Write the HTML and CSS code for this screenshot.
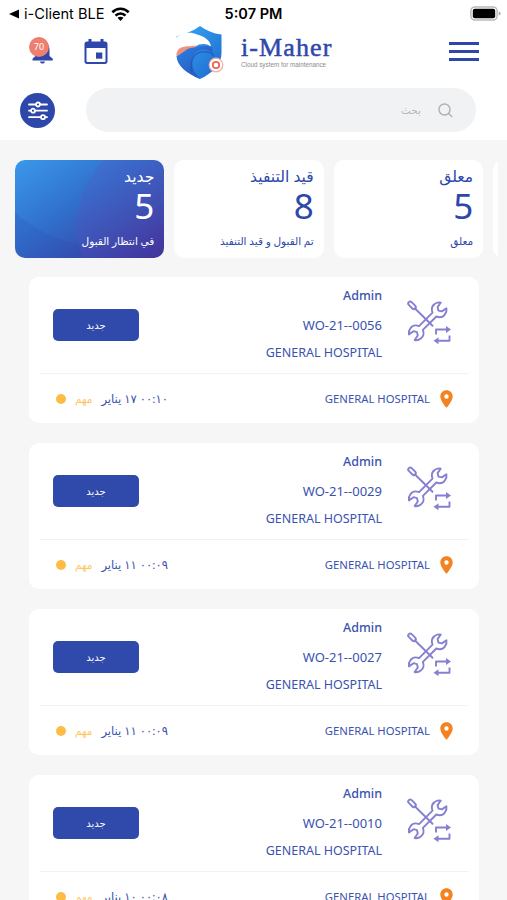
FILE: index.html
```html
<!DOCTYPE html>
<html lang="ar">
  <head>
    <meta charset="UTF-8" />
    <meta name="viewport" content="width=device-width, initial-scale=1.0" />
    <title>i-Maher</title>
    <link rel="stylesheet" href="styles.css" />
  </head>
  <body>
    <svg class="sprite" width="0" height="0">
      <symbol id="tools" viewBox="0 0 46 48">
        <g fill="none" stroke="#8580d0" stroke-width="1.900" stroke-linejoin="round" stroke-linecap="round">
          <path transform="translate(22.700 23.300) rotate(-45)" d="M-9.500-2.700H9.500C11-6 14-7.800 17-7.300c2 .2 4.200 1.400 5.500 3.300L17-3l-1.800 3L17 3l5.500 1c-1.300 1.900-3.500 3.100-5.500 3.300-3 .5-6-1.300-7.500-4.600H-9.500C-11 6-14 7.800-17 7.300c-2-.2-4.200-1.400-5.500-3.300L-17 3l1.800-3L-17-3l-5.500-1c1.300-1.900 3.500-3.100 5.500-3.300 3-.5 6 1.300 7.500 4.600z" />
          <path d="m10 10.500 17.500 17.300" />
          <rect transform="translate(7 7.300) rotate(45)" x="-4.500" y="-2" width="9" height="4" rx="2" />
          <path stroke-linecap="butt" d="M31 36.500v-5h11M44.500 37.500v5.300H31" />
        </g>
        <path d="m41 28 5 3.500-5 3.500zM33.500 39.300 28.500 42.800l5 3.500z" fill="#8580d0" />
      </symbol>
      <symbol id="pin" viewBox="0 0 13 18">
        <path fill="#f58220" fill-rule="evenodd" d="M6.500.3C3 .3.300 3 .300 6.500c0 4.600 6.200 11.300 6.200 11.300s6.200-6.700 6.200-11.300C12.700 3 10 .3 6.500.3zm0 8.400a2.200 2.200 0 1 1 0-4.400 2.200 2.200 0 0 1 0 4.400z" />
      </symbol>
    </svg>

    <header class="header">
      <div class="status">
        <span class="back">
          <svg width="11" height="10" viewBox="0 0 11 10"><path d="M0 5 10 .5v9z" /></svg>
          <span class="app">i-Client BLE</span>
          <svg width="19" height="14" viewBox="0 0 19 14">
            <g fill="none" stroke="#000" stroke-width="2.600">
              <path d="M1.300 5.200c4.700-4.600 11.700-4.600 16.400 0M4.500 8.600c2.900-2.900 7.100-2.900 10 0" />
            </g>
            <path d="m9.500 14-3-3.200c1.700-1.500 4.300-1.500 6 0z" />
          </svg>
        </span>
        <span class="clock">5:07 PM</span>
        <svg class="battery" width="31" height="15" viewBox="0 0 31 15">
          <rect x=".9" y=".9" width="26.200" height="13.200" rx="4" fill="#fff" stroke="#b9b9b9" stroke-width="1.500" />
          <rect x="2.800" y="2.800" width="22.400" height="9.400" rx="2" />
          <path d="M28.700 5.500c1.600.5 2 1.200 2 2s-.4 1.500-2 2z" fill="#aaa" />
        </svg>
      </div>

      <div class="navbar">
        <div class="bell">
          <svg width="22" height="24" viewBox="0 0 22 24" fill="#2d48aa">
            <path d="M10.500 1c4.500.5 7 4 7 8.500v6.500l3.300 2.800v1.700H.500v-1.700L3.500 16V9.500c0-4.500 2.500-8 7-8.500zM8 21.500h5c-.3 1.400-1.200 2-2.500 2s-2.200-.6-2.500-2z" />
          </svg>
          <span class="badge">70</span>
        </div>
        <svg class="calendar" width="24" height="26" viewBox="0 0 24 26">
          <path fill="#2d48aa" fill-rule="evenodd" d="M4.500 0h3v2.500h9V0h3v2.500H21c1.500 0 2.500 1 2.500 2.500v17.500c0 1.500-1 2.500-2.500 2.500H3C1.500 25 .5 24 .5 22.500V5C.5 3.500 1.500 2.500 3 2.500h1.500zM2.500 9v13.200c0 .5.300.8.800.8h17.400c.500 0 .800-.3.800-.8V9z" />
          <path fill="#2d48aa" d="M12 13.500h6.300v6.200H12z" />
        </svg>
        <div class="brand">
          <svg width="49" height="54" viewBox="0 0 49 54">
            <defs>
              <linearGradient id="shield" x1="0" y1="0" x2="1" y2="1">
                <stop offset="0" stop-color="#3aa9f2" />
                <stop offset="1" stop-color="#1b68d0" />
              </linearGradient>
              <linearGradient id="wave" x1="0" y1="0" x2="1" y2="1">
                <stop offset="0" stop-color="#2d7fe2" />
                <stop offset="1" stop-color="#2650b4" />
              </linearGradient>
            </defs>
            <path d="M1.500 10.500C10 8 18 5 25 0c6 4.500 13 7.500 21.500 8.500V27c0 12-9 20-21.500 26C11 47 2 39 1.500 28z" fill="url(#shield)" />
            <path d="M0 12.500c7-6 15-7 22-4 7 2 13 5 14 12-4-3-8-3-12-2-3 2-7 4-10 5L1.500 31H0z" fill="#fff" />
            <path d="M1.500 30c-.3-5 2.500-8.500 7-9 5-1.500 9 0 14-2-5 5-10 4-14 7-3 2-5 3-7 4z" fill="#f08f7c" />
            <path d="M1.500 30c5-2 8-6 14-8 7-1 14-3 21-1.500l2 7.500c-6-6-15-5-19 0-5 7-2 18 6 25C11 47 2 40 1.500 30z" fill="url(#wave)" />
            <path d="M17 46c-2-9 0-18 9-20 6-1 10 0 13 4" fill="none" stroke="#1e4fb4" stroke-width="1.500" opacity=".6" />
            <circle cx="41" cy="39" r="6.800" fill="#fff" stroke="#f4aaa2" stroke-width="1.200" />
            <circle cx="41" cy="39" r="3.200" fill="none" stroke="#e26a5b" stroke-width="1.800" />
          </svg>
          <div class="brand-text">
            <span class="brand-name">i-Maher</span>
            <span class="slogan">Cloud system for maintenance</span>
          </div>
        </div>
        <div class="menu"><i></i><i></i><i></i></div>
      </div>

      <div class="searchbar">
        <div class="filter">
          <svg width="20" height="19" viewBox="0 0 20 19">
            <g fill="#2d48aa" stroke="#fff" stroke-width="1.800" stroke-linecap="round">
              <path d="M1 3.500h18M1 9.700h18M1 16.200h18" />
              <circle cx="10" cy="3.500" r="2" />
              <circle cx="5" cy="9.700" r="2" />
              <circle cx="15" cy="16.200" r="2" />
            </g>
          </svg>
        </div>
        <div class="search">
          <span>بحث</span>
          <svg width="15" height="15" viewBox="0 0 15 15" fill="none" stroke="#adb0b4" stroke-width="1.400">
            <circle cx="6.500" cy="6.500" r="5.500" />
            <path d="m10.500 10.500 3.800 3.500" />
          </svg>
        </div>
      </div>
    </header>

    <div class="tabs">
      <div class="tab active">
        <p class="title">جديد</p>
        <p class="num">5</p>
        <p class="desc">في انتظار القبول</p>
      </div>
      <div class="tab">
        <p class="title">قيد التنفيذ</p>
        <p class="num">8</p>
        <p class="desc">تم القبول و قيد التنفيذ</p>
      </div>
      <div class="tab">
        <p class="title">معلق</p>
        <p class="num">5</p>
        <p class="desc">معلق</p>
      </div>
      <div class="tab"></div>
    </div>

    <div class="list">
      <div class="item">
        <div class="top">
          <span class="btn">جديد</span>
          <div class="info">
            <p class="name">Admin</p>
            <p class="code">WO-21--0056</p>
            <p class="place">GENERAL HOSPITAL</p>
          </div>
          <svg class="tools"><use href="#tools" /></svg>
        </div>
        <div class="bottom">
          <i class="dot"></i>
          <span class="level">مهم</span>
          <span class="time" dir="rtl">٠٠:١٠ ١٧ يناير</span>
          <span class="location">GENERAL HOSPITAL</span>
          <svg class="pin"><use href="#pin" /></svg>
        </div>
      </div>
      <div class="item">
        <div class="top">
          <span class="btn">جديد</span>
          <div class="info">
            <p class="name">Admin</p>
            <p class="code">WO-21--0029</p>
            <p class="place">GENERAL HOSPITAL</p>
          </div>
          <svg class="tools"><use href="#tools" /></svg>
        </div>
        <div class="bottom">
          <i class="dot"></i>
          <span class="level">مهم</span>
          <span class="time" dir="rtl">٠٠:٠٩ ١١ يناير</span>
          <span class="location">GENERAL HOSPITAL</span>
          <svg class="pin"><use href="#pin" /></svg>
        </div>
      </div>
      <div class="item">
        <div class="top">
          <span class="btn">جديد</span>
          <div class="info">
            <p class="name">Admin</p>
            <p class="code">WO-21--0027</p>
            <p class="place">GENERAL HOSPITAL</p>
          </div>
          <svg class="tools"><use href="#tools" /></svg>
        </div>
        <div class="bottom">
          <i class="dot"></i>
          <span class="level">مهم</span>
          <span class="time" dir="rtl">٠٠:٠٩ ١١ يناير</span>
          <span class="location">GENERAL HOSPITAL</span>
          <svg class="pin"><use href="#pin" /></svg>
        </div>
      </div>
      <div class="item">
        <div class="top">
          <span class="btn">جديد</span>
          <div class="info">
            <p class="name">Admin</p>
            <p class="code">WO-21--0010</p>
            <p class="place">GENERAL HOSPITAL</p>
          </div>
          <svg class="tools"><use href="#tools" /></svg>
        </div>
        <div class="bottom">
          <i class="dot"></i>
          <span class="level">مهم</span>
          <span class="time" dir="rtl">٠٠:٠٨ ١٠ يناير</span>
          <span class="location">GENERAL HOSPITAL</span>
          <svg class="pin"><use href="#pin" /></svg>
        </div>
      </div>
    </div>
  </body>
</html>
```

FILE: styles.css
```css
* {
  margin: 0;
  padding: 0;
  box-sizing: border-box;
}
body {
  height: 900px;
  overflow: hidden;
  background: #f6f6f6;
  color: #3a52b0;
  font-family: "Noto Sans", "DejaVu Sans", sans-serif;
}
svg {
  display: block;
  flex-shrink: 0;
}
.sprite {
  position: absolute;
}

.header {
  height: 140px;
  background: #fff;
}
.status {
  display: grid;
  grid-template-columns: 1fr auto 1fr;
  align-items: center;
  height: 26px;
  padding: 1px 6px 0 9px;
  color: #000;
  font-family: Inter, "Liberation Sans", sans-serif;
  font-size: 14px;
}
.back {
  display: flex;
  align-items: center;
}
.app {
  width: 82px;
  margin: 0 5px 0 4px;
  white-space: nowrap;
  font-size: 14.6px;
}
.clock {
  margin-right: 3px;
  font-weight: 600;
  font-size: 14.5px;
}
.battery {
  justify-self: end;
}

.navbar {
  display: flex;
  height: 54px;
  padding: 0 28px;
}
.bell {
  position: relative;
  width: 26px;
  padding: 14px 0 0 4px;
}
.badge {
  position: absolute;
  top: 11px;
  left: 1px;
  width: 20px;
  height: 20px;
  border-radius: 50%;
  background: #ee7e6e;
  color: #fff;
  font-size: 9px;
  line-height: 20px;
  text-align: center;
}
.calendar {
  margin: 13px 0 0 30px;
}
.brand {
  display: flex;
  margin-left: 67px;
}
.brand-text {
  padding: 8px 0 0 17px;
}
.brand-name {
  display: block;
  color: #2d48aa;
  font-family: "Liberation Serif", serif;
  font-size: 26px;
  line-height: 28px;
  letter-spacing: 1.1px;
  -webkit-text-stroke: 0.5px #2d48aa;
}
.slogan {
  display: block;
  color: #8b8b90;
  font-family: "Liberation Sans", sans-serif;
  font-size: 6.3px;
  line-height: 6px;
  white-space: nowrap;
}
.menu {
  display: flex;
  flex-direction: column;
  gap: 5px;
  width: 30px;
  margin: 16px 0 0 auto;
}
.menu i {
  height: 3px;
  background: #2d48aa;
}

.searchbar {
  display: flex;
  align-items: center;
  gap: 31px;
  height: 44px;
  margin-top: 8px;
  padding: 0 31px 0 20px;
}
.filter {
  display: flex;
  align-items: center;
  justify-content: center;
  width: 35px;
  height: 35px;
  border-radius: 50%;
  background: #2d48aa;
}
.search {
  flex: 1;
  display: flex;
  align-items: center;
  justify-content: flex-end;
  gap: 17px;
  height: 44px;
  padding-right: 23px;
  border-radius: 22px;
  background: #f1f2f4;
  color: #b4b6ba;
  font-size: 10.5px;
}

.tabs {
  display: flex;
  gap: 10px;
  width: 498px;
  padding: 20px 0 0 15px;
  overflow: hidden;
}
.tab {
  flex: 0 0 149.4px;
  height: 98px;
  padding: 4px 10px 0;
  border-radius: 10px;
  background: #fff;
  color: #2d48aa;
  text-align: right;
}
.tab.active {
  color: #fff;
  background: radial-gradient(circle at 150px 65px, rgba(100, 75, 190, 0.22) 88px, transparent 89px),
    radial-gradient(circle at 90px -50px, transparent 136px, rgba(40, 60, 170, 0.15) 137px),
    linear-gradient(145deg, #3b98ea 0%, #3070cc 42%, #3650b0 70%, #3c2a8d 100%);
}
.tab .title {
  height: 24px;
  font-size: 15.6px;
  line-height: 24px;
}
.tab .num {
  height: 36px;
  font-size: 35px;
  line-height: 36px;
}
.tab .desc {
  margin-top: 7px;
  font-size: 10.5px;
  line-height: 20px;
  white-space: nowrap;
}

.list {
  display: flex;
  flex-direction: column;
  gap: 20px;
  padding: 19px 28px 0 29px;
}
.item {
  flex-shrink: 0;
  height: 146px;
  padding: 0 10px;
  border-radius: 10px;
  background: #fff;
}
.top {
  display: flex;
  align-items: flex-start;
  height: 97px;
  padding: 5px 18px 0 14px;
  border-bottom: 1px solid #f3f3f5;
}
.btn {
  width: 86px;
  height: 32px;
  margin-top: 27px;
  border-radius: 5px;
  background: #2f4aab;
  color: #fff;
  font-size: 10px;
  line-height: 32px;
  text-align: center;
}
.info {
  flex: 1;
  font-size: 12.5px;
  line-height: 28.5px;
  text-align: right;
}
.name {
  font-weight: 500;
}
.code {
  font-size: 13px;
}
.tools {
  width: 46px;
  height: 48px;
  margin: 16px 0 0 23px;
}
.bottom {
  display: flex;
  align-items: center;
  height: 49px;
  padding: 0 16px 0 17px;
  font-size: 11.3px;
}
.dot {
  width: 10px;
  height: 10px;
  border-radius: 50%;
  background: #fdbd45;
}
.level {
  margin: 0 9px;
  color: #fdc65c;
  font-size: 10.5px;
}
.time {
  font-size: 11.6px;
}
.location {
  margin: 0 10px 0 auto;
}
.pin {
  width: 13px;
  height: 18px;
}
```
